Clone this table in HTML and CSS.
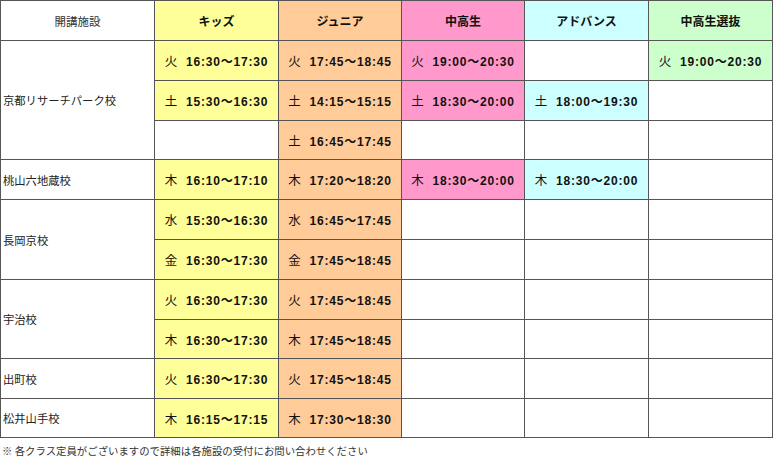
FILE: index.html
```html
<!DOCTYPE html>
<html lang="ja">
<head>
<meta charset="utf-8">
<link rel="stylesheet" href="styles.css">
</head>
<body>
<table class="sched">
  <colgroup>
    <col class="c-site"><col class="c-col"><col class="c-col2"><col class="c-col2"><col class="c-col"><col class="c-col">
  </colgroup>
  <thead>
    <tr class="h40">
      <th class="site-h">開講施設</th>
      <th class="kids">キッズ</th>
      <th class="jr">ジュニア</th>
      <th class="hs">中高生</th>
      <th class="adv">アドバンス</th>
      <th class="sel">中高生選抜</th>
    </tr>
  </thead>
  <tbody>
    <tr class="h40 top">
      <td class="site" rowspan="3">京都リサーチパーク校</td>
      <td class="kids"><span class="day">火</span> 16:30〜17:30</td>
      <td class="jr"><span class="day">火</span> 17:45〜18:45</td>
      <td class="hs"><span class="day">火</span> 19:00〜20:30</td>
      <td></td>
      <td class="sel"><span class="day">火</span> 19:00〜20:30</td>
    </tr>
    <tr class="h40 sub">
      <td class="kids"><span class="day">土</span> 15:30〜16:30</td>
      <td class="jr"><span class="day">土</span> 14:15〜15:15</td>
      <td class="hs"><span class="day">土</span> 18:30〜20:00</td>
      <td class="adv"><span class="day">土</span> 18:00〜19:30</td>
      <td></td>
    </tr>
    <tr class="h39 sub">
      <td></td>
      <td class="jr"><span class="day">土</span> 16:45〜17:45</td>
      <td></td>
      <td></td>
      <td></td>
    </tr>
    <tr class="h40 top">
      <td class="site">桃山六地蔵校</td>
      <td class="kids"><span class="day">木</span> 16:10〜17:10</td>
      <td class="jr"><span class="day">木</span> 17:20〜18:20</td>
      <td class="hs"><span class="day">木</span> 18:30〜20:00</td>
      <td class="adv"><span class="day">木</span> 18:30〜20:00</td>
      <td></td>
    </tr>
    <tr class="h40 top">
      <td class="site" rowspan="2">長岡京校</td>
      <td class="kids"><span class="day">水</span> 15:30〜16:30</td>
      <td class="jr"><span class="day">水</span> 16:45〜17:45</td>
      <td></td><td></td><td></td>
    </tr>
    <tr class="h40 sub">
      <td class="kids"><span class="day">金</span> 16:30〜17:30</td>
      <td class="jr"><span class="day">金</span> 17:45〜18:45</td>
      <td></td><td></td><td></td>
    </tr>
    <tr class="h40 top">
      <td class="site" rowspan="2">宇治校</td>
      <td class="kids"><span class="day">火</span> 16:30〜17:30</td>
      <td class="jr"><span class="day">火</span> 17:45〜18:45</td>
      <td></td><td></td><td></td>
    </tr>
    <tr class="h39 sub">
      <td class="kids"><span class="day">木</span> 16:30〜17:30</td>
      <td class="jr"><span class="day">木</span> 17:45〜18:45</td>
      <td></td><td></td><td></td>
    </tr>
    <tr class="h40 top">
      <td class="site">出町校</td>
      <td class="kids"><span class="day">火</span> 16:30〜17:30</td>
      <td class="jr"><span class="day">火</span> 17:45〜18:45</td>
      <td></td><td></td><td></td>
    </tr>
    <tr class="h39 top">
      <td class="site">松井山手校</td>
      <td class="kids"><span class="day">木</span> 16:15〜17:15</td>
      <td class="jr"><span class="day">木</span> 17:30〜18:30</td>
      <td></td><td></td><td></td>
    </tr>
  </tbody>
</table>
<p class="note">※ 各クラス定員がございますので詳細は各施設の受付にお問い合わせください</p>
</body>
</html>
```
FILE: styles.css
```css
html, body {
  margin: 0;
  padding: 0;
  background: #fff;
}
body {
  font-family: "Liberation Sans", "Noto Sans CJK JP", sans-serif;
  color: #111;
}
.sched {
  border-collapse: collapse;
  table-layout: fixed;
  width: 773px;
}
.c-site { width: 154px; }
.c-col { width: 124px; }
.c-col2 { width: 123px; }
.sched th,
.sched td {
  border: 1px solid #555;
  padding: 0;
  text-align: center;
  vertical-align: middle;
  font-size: 12px;
  font-weight: bold;
  letter-spacing: 0.8px;
  white-space: nowrap;
  overflow: hidden;
}
.sched td .day {
  font-family: "Noto Sans CJK JP", sans-serif;
  font-weight: normal;
  font-size: 12.5px;
  margin-right: 4px;
}
.sched th {
  font-family: "Noto Sans CJK JP", sans-serif;
  letter-spacing: 0;
}
.sched th.site-h {
  font-weight: normal;
  font-size: 11.5px;
  color: #333;
}
.h40 > td, .h40 > th { height: 39px; }
.h39 > td, .h39 > th { height: 38px; }
.sub > td {
  border-top: 1px dotted #999;
}
.sched td.site {
  text-align: left;
  padding-left: 2px;
  font-family: "Noto Sans CJK JP", sans-serif;
  font-weight: normal;
  font-size: 11.3px;
  letter-spacing: 0;
  color: #222;
}
.kids { background: #ffff99; }
.jr { background: #ffcc99; }
.hs { background: #ff99cc; }
.adv { background: #ccffff; }
.sel { background: #ccffcc; }
.note {
  margin: 5px 0 0 2px;
  font-family: "Noto Sans CJK JP", sans-serif;
  font-size: 10.4px;
  color: #333;
}
```
